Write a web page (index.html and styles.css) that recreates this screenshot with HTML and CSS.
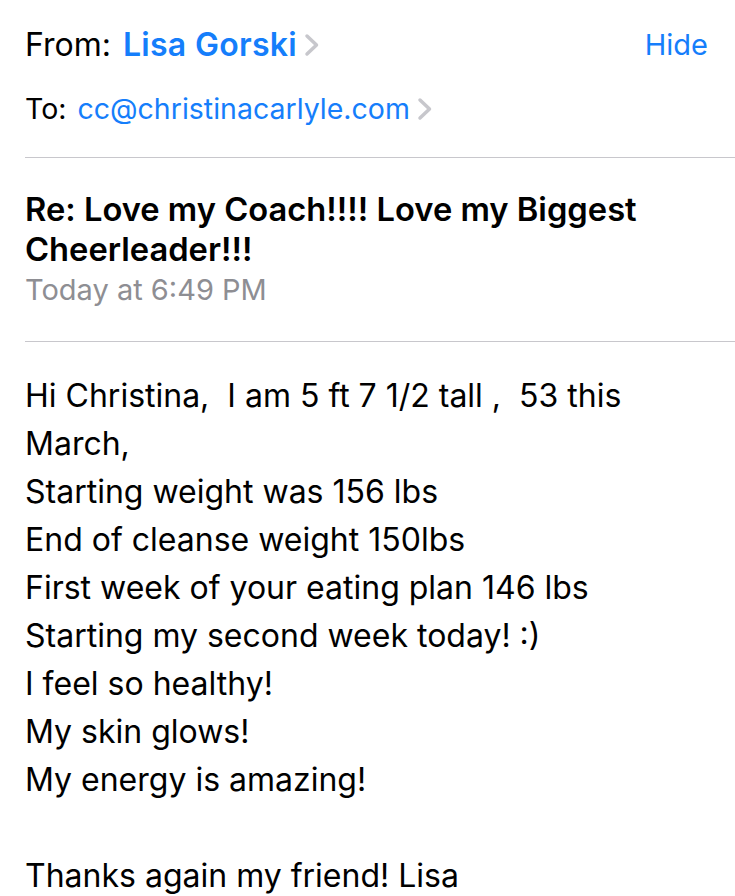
FILE: index.html
```html
<!DOCTYPE html>
<html>
<head>
<meta charset="utf-8">
<link rel="stylesheet" href="styles.css">
</head>
<body>
<div class="mail">
  <div class="hdr">
    <div class="row from">
      <span class="label">From:</span>
      <span class="sender">Lisa Gorski</span>
      <svg class="chev" width="16" height="24" viewBox="0 0 16 24"><path d="M3 3 L12.5 12 L3 21" fill="none" stroke="#c7c7cc" stroke-width="3.5" stroke-linecap="round" stroke-linejoin="round"/></svg>
      <span class="spacer"></span>
      <span class="hide">Hide</span>
    </div>
    <div class="row to">
      <span class="label">To:</span>
      <span class="addr">cc@christinacarlyle.com</span>
      <svg class="chev" width="16" height="24" viewBox="0 0 16 24"><path d="M3 3 L12.5 12 L3 21" fill="none" stroke="#c7c7cc" stroke-width="3.5" stroke-linecap="round" stroke-linejoin="round"/></svg>
    </div>
  </div>
  <div class="subj">
    <div class="title">Re: Love my Coach!!!! Love my Biggest Cheerleader!!!</div>
    <div class="date">Today at 6:49 PM</div>
  </div>
  <div class="body">
    <div>Hi Christina,&nbsp; I am 5 ft 7 1/2 tall ,&nbsp; 53 this March,</div>
    <div>Starting weight was 156 lbs</div>
    <div>End of cleanse weight 150lbs</div>
    <div>First week of your eating plan 146 lbs</div>
    <div>Starting my second week today! :)</div>
    <div>I feel so healthy!</div>
    <div>My skin glows!</div>
    <div>My energy is amazing!</div>
    <div>&nbsp;</div>
    <div>Thanks again my friend! Lisa</div>
  </div>
</div>
</body>
</html>
```
FILE: styles.css
```css
html, body {
  margin: 0;
  padding: 0;
  background: #fff;
}
body {
  font-family: Inter, "Liberation Sans", sans-serif;
  color: #000;
  width: 735px;
  overflow: hidden;
}
.mail {
  padding-left: 25px;
}
.hdr {
  border-bottom: 1px solid #c8c7cc;
  padding-right: 27px;
  height: 158px;
  box-sizing: border-box;
}
.row {
  display: flex;
  align-items: center;
}
.from {
  height: 88px;
  font-size: 32px;
}
.from .label {
  margin-right: 12px;
}
.sender {
  color: #157efb;
  font-weight: 600;
  letter-spacing: 0.3px;
}
.chev {
  margin-left: 7px;
  margin-top: 1px;
}
.spacer {
  flex: 1;
}
.hide {
  color: #157efb;
  font-size: 29px;
}
.to {
  height: 40px;
  font-size: 28.5px;
}
.to .label {
  margin-right: 11px;
}
.addr {
  color: #157efb;
}
.subj {
  border-bottom: 1px solid #c8c7cc;
  height: 184px;
  box-sizing: border-box;
  padding-top: 31px;
}
.title {
  font-size: 32.7px;
  font-weight: 600;
  line-height: 40px;
  width: 670px;
}
.date {
  color: #8e8e93;
  font-size: 29px;
  line-height: 42px;
}
.body {
  padding-top: 30px;
  font-size: 32px;
  line-height: 48px;
  width: 660px;
}
```
